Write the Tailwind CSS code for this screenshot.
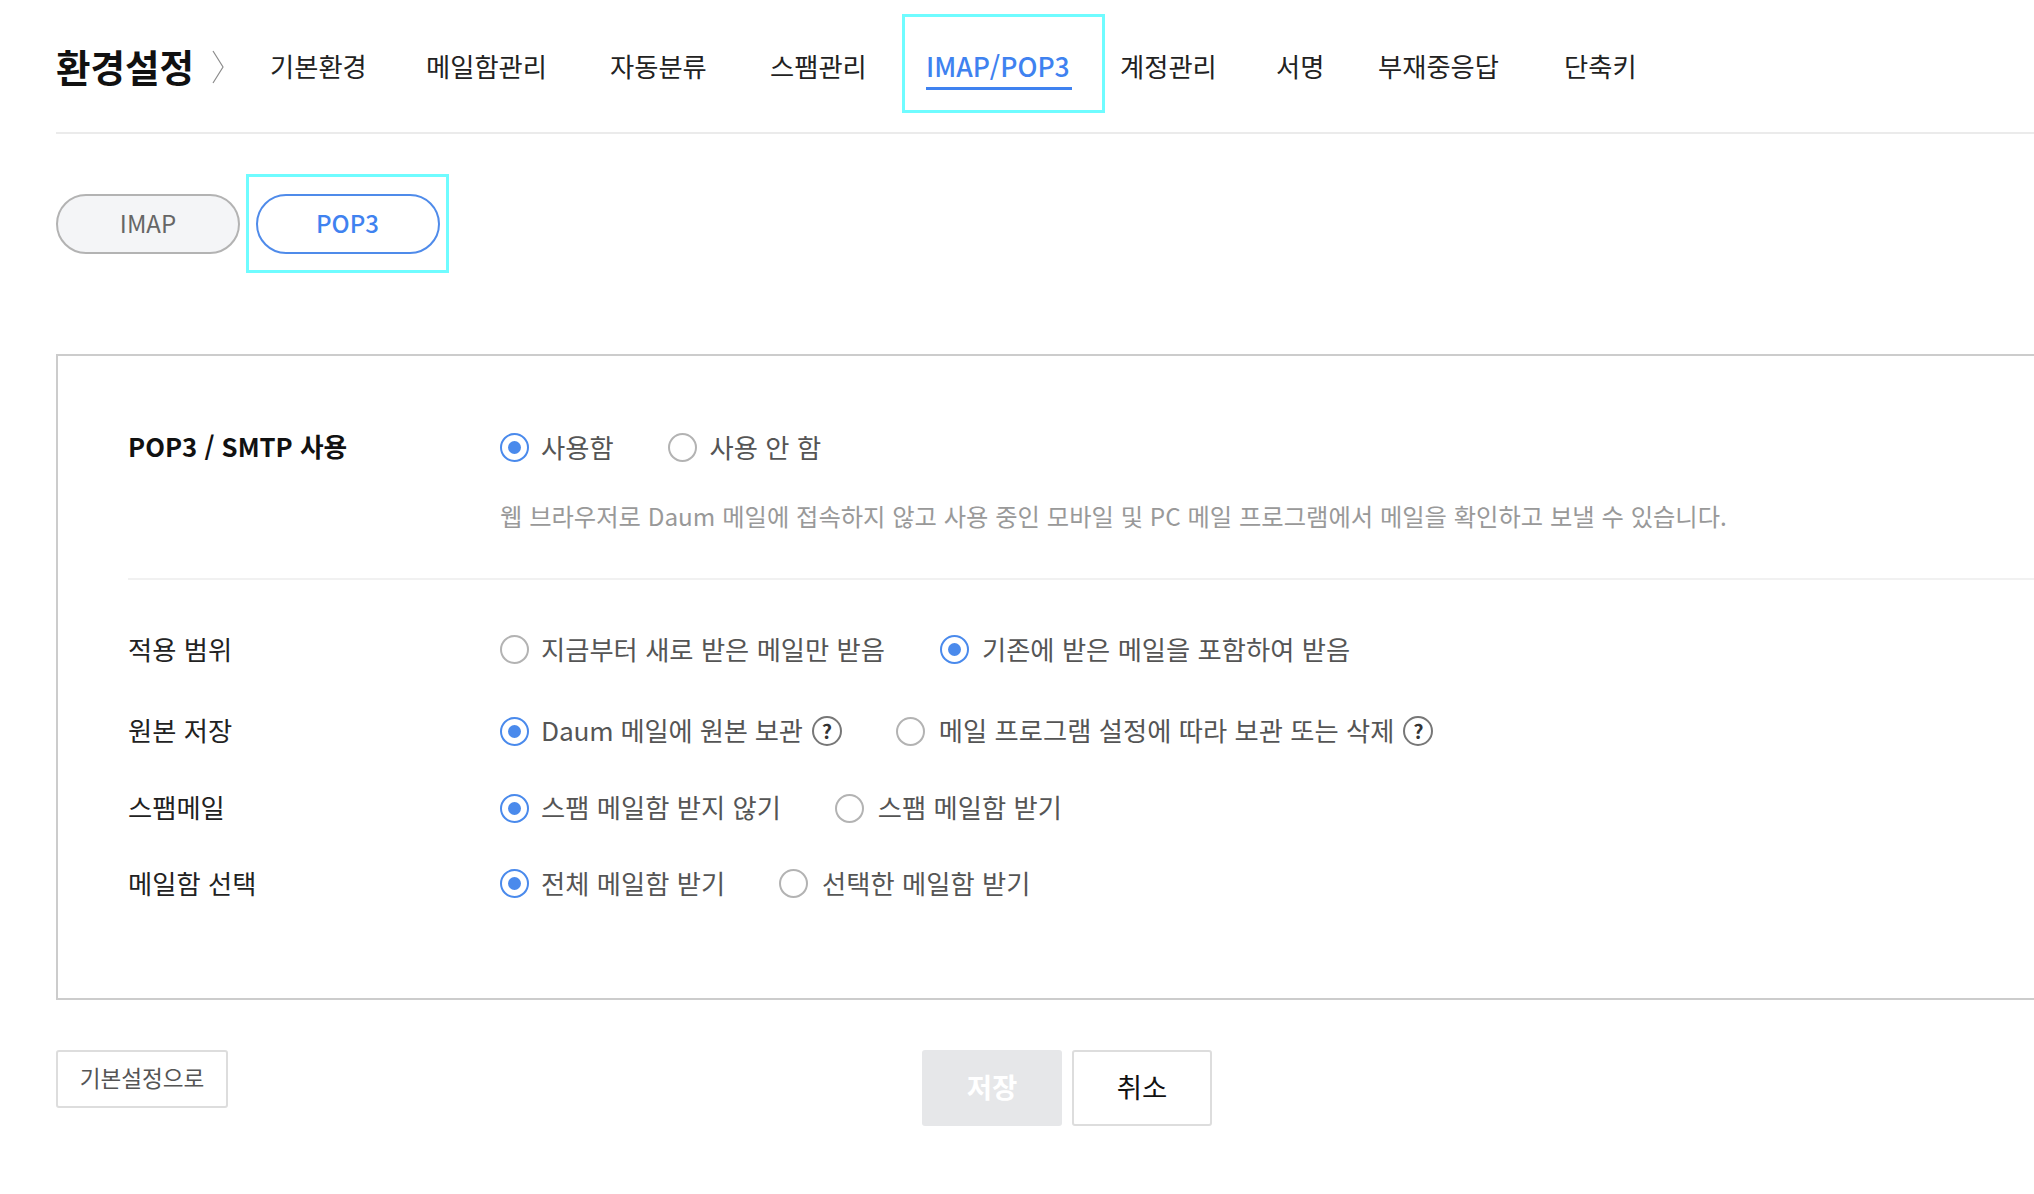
<!DOCTYPE html>
<html lang="ko">
<head>
    <meta charset="UTF-8" />
    <title>환경설정</title>
    <script src="https://cdn.jsdelivr.net/npm/@tailwindcss/browser@4"></script>
</head>
<body class="bg-white w-[2034px] h-[1194px] overflow-hidden font-['Noto_Sans_CJK_KR','Noto_Sans',sans-serif] text-[26.3px] text-[#222]">

    <!-- Top nav -->
    <header class="ml-[56px] pt-[14px] h-[134px] border-b-2 border-[#ebebeb]">
        <nav class="flex items-center h-[99px]">
            <h1 class="w-[156px] text-[37.5px] leading-[48px] font-bold text-[#111] mt-[4px] whitespace-nowrap">환경설정</h1>
            <svg class="w-[13px] h-[34px] shrink-0 mt-[6px]" viewBox="0 0 13 34" fill="none" stroke="#8c8c8c" stroke-width="1.2"><path d="M1 1l10 16L1 33" /></svg>
            <a class="ml-[45px] w-[97px] mt-[5px] whitespace-nowrap">기본환경</a>
            <a class="ml-[59px] w-[121px] mt-[5px] whitespace-nowrap">메일함관리</a>
            <a class="ml-[63px] w-[97px] mt-[5px] whitespace-nowrap">자동분류</a>
            <a class="ml-[63px] w-[96px] mt-[5px] whitespace-nowrap">스팸관리</a>
            <div class="ml-[36px] w-[203px] h-[99px] border-[3px] border-[#6ffcff] pl-[21px] pt-[29px]">
                <a class="block w-[146px] h-[44px] border-b-[3px] border-[#3f82f0] text-[#3f82f0] text-[26.5px] font-medium whitespace-nowrap leading-[40px]">IMAP/POP3</a>
            </div>
            <a class="ml-[15px] w-[97px] mt-[5px] whitespace-nowrap">계정관리</a>
            <a class="ml-[59px] w-[47px] mt-[5px] whitespace-nowrap">서명</a>
            <a class="ml-[55px] w-[121px] mt-[5px] whitespace-nowrap">부재중응답</a>
            <a class="ml-[65px] w-[74px] mt-[5px] whitespace-nowrap">단축키</a>
        </nav>
    </header>

    <!-- Tabs -->
    <div class="ml-[56px] mt-[40px] flex items-center h-[99px]">
        <button class="w-[184px] h-[60px] rounded-full border-2 border-[#b3b3b3] bg-[#f4f5f7] text-[24px] text-[#666] pb-[2px]">IMAP</button>
        <div class="ml-[6px] w-[203px] h-[99px] border-[3px] border-[#6ffcff] flex items-center justify-center">
            <button class="w-[184px] h-[60px] rounded-full border-2 border-[#4f8bea] text-[24px] font-medium text-[#3f82f0] pb-[2px]">POP3</button>
        </div>
    </div>

    <!-- Settings box -->
    <section class="ml-[56px] mt-[81px] h-[646px] border-y-2 border-l-2 border-[#cccccc] pl-[70px] pt-[71px]">
        <div class="flex items-center h-[40px]">
            <div class="w-[372px] font-bold text-[#111] text-[25.7px] mb-[1px]">POP3 / SMTP 사용</div>
            <label class="flex items-center">
                <span class="w-[29px] h-[29px] rounded-full border-2 border-[#4a8aec] flex items-center justify-center"><span class="w-[13px] h-[13px] rounded-full bg-[#4a8aec]"></span></span>
                <span class="ml-[12px] text-[#555]">사용함</span>
            </label>
            <label class="flex items-center ml-[54px]">
                <span class="w-[29px] h-[29px] rounded-full border-2 border-[#b3b3b3]"></span>
                <span class="ml-[13px] text-[#555]">사용 안 함</span>
            </label>
        </div>
        <p class="ml-[372px] mt-[31px] h-[36px] leading-[36px] text-[24.3px] text-[#999] whitespace-nowrap">웹 브라우저로 Daum 메일에 접속하지 않고 사용 중인 모바일 및 PC 메일 프로그램에서 메일을 확인하고 보낼 수 있습니다.</p>
        <div class="mt-[44px] h-[2px] bg-[#f1f1f1]"></div>

        <div class="flex items-center h-[40px] mt-[49px]">
            <div class="w-[372px]">적용 범위</div>
            <label class="flex items-center">
                <span class="w-[29px] h-[29px] rounded-full border-2 border-[#b3b3b3]"></span>
                <span class="ml-[12px] text-[#555]">지금부터 새로 받은 메일만 받음</span>
            </label>
            <label class="flex items-center ml-[55px]">
                <span class="w-[29px] h-[29px] rounded-full border-2 border-[#4a8aec] flex items-center justify-center"><span class="w-[13px] h-[13px] rounded-full bg-[#4a8aec]"></span></span>
                <span class="ml-[13px] text-[#555]">기존에 받은 메일을 포함하여 받음</span>
            </label>
        </div>

        <div class="flex items-center h-[40px] mt-[42px]">
            <div class="w-[372px] mb-[2px]">원본 저장</div>
            <label class="flex items-center">
                <span class="w-[29px] h-[29px] rounded-full border-2 border-[#4a8aec] flex items-center justify-center"><span class="w-[13px] h-[13px] rounded-full bg-[#4a8aec]"></span></span>
                <span class="ml-[12px] mb-[2px] text-[#555] tracking-[-0.2px]">Daum 메일에 원본 보관</span>
            </label>
            <span class="ml-[9px] w-[30px] h-[30px] rounded-full border-2 border-[#777] flex items-center justify-center text-[20px] font-bold text-[#333]">?</span>
            <label class="flex items-center ml-[54px]">
                <span class="w-[29px] h-[29px] rounded-full border-2 border-[#b3b3b3]"></span>
                <span class="ml-[14px] mb-[2px] text-[#555]">메일 프로그램 설정에 따라 보관 또는 삭제</span>
            </label>
            <span class="ml-[9px] w-[30px] h-[30px] rounded-full border-2 border-[#777] flex items-center justify-center text-[20px] font-bold text-[#333]">?</span>
        </div>

        <div class="flex items-center h-[40px] mt-[37px]">
            <div class="w-[372px] mb-[2px]">스팸메일</div>
            <label class="flex items-center">
                <span class="w-[29px] h-[29px] rounded-full border-2 border-[#4a8aec] flex items-center justify-center"><span class="w-[13px] h-[13px] rounded-full bg-[#4a8aec]"></span></span>
                <span class="ml-[12px] mb-[2px] text-[#555]">스팸 메일함 받지 않기</span>
            </label>
            <label class="flex items-center ml-[54px]">
                <span class="w-[29px] h-[29px] rounded-full border-2 border-[#b3b3b3]"></span>
                <span class="ml-[14px] mb-[2px] text-[#555]">스팸 메일함 받기</span>
            </label>
        </div>

        <div class="flex items-center h-[40px] mt-[35px]">
            <div class="w-[372px]">메일함 선택</div>
            <label class="flex items-center">
                <span class="w-[29px] h-[29px] rounded-full border-2 border-[#4a8aec] flex items-center justify-center"><span class="w-[13px] h-[13px] rounded-full bg-[#4a8aec]"></span></span>
                <span class="ml-[12px] text-[#555]">전체 메일함 받기</span>
            </label>
            <label class="flex items-center ml-[54px]">
                <span class="w-[29px] h-[29px] rounded-full border-2 border-[#b3b3b3]"></span>
                <span class="ml-[14px] text-[#555]">선택한 메일함 받기</span>
            </label>
        </div>
    </section>

    <!-- Footer buttons -->
    <div class="ml-[56px] mt-[50px] flex items-start">
        <button class="w-[172px] h-[58px] rounded-[3px] border-2 border-[#dddddd] text-[22.6px] text-[#555] pb-[2px]">기본설정으로</button>
        <button class="ml-[694px] w-[140px] h-[76px] rounded-[3px] bg-[#e6e7e9] text-[27.5px] text-white font-bold pb-[3px]">저장</button>
        <button class="ml-[10px] w-[140px] h-[76px] rounded-[3px] border-2 border-[#dddddd] text-[27.5px] text-[#111] pb-[3px]">취소</button>
    </div>

</body>
</html>
